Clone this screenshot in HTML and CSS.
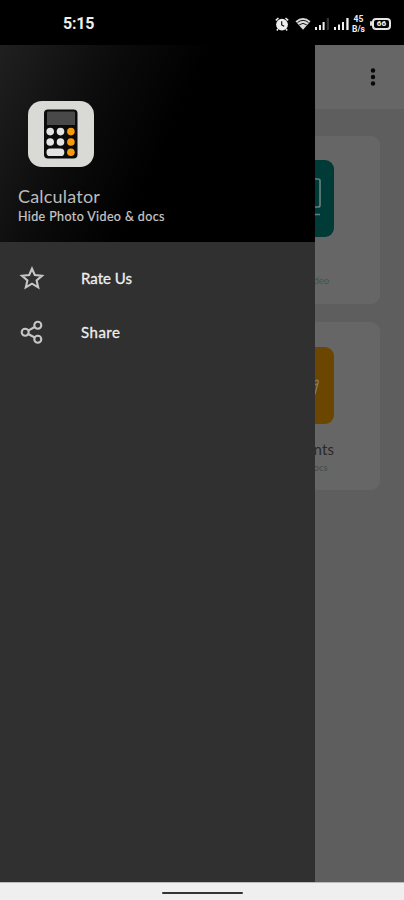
FILE: index.html
```html
<!DOCTYPE html>
<html lang="en">
<head>
<meta charset="utf-8">
<title>Calculator</title>
<link rel="stylesheet" href="styles.css">
</head>
<body>
<div class="phone">
  <header class="status">
    <span class="clock">5:15</span>
    <div class="indicators">
      <svg width="14" height="14" viewBox="0 0 14 14"><circle cx="7" cy="7.6" r="5.9" fill="#eee"/><path d="M.8 3.4 3.5 1M13.2 3.4 10.500 1M3 12l-1.200 1.400M11 12l1.200 1.400" stroke="#eee" stroke-width="1.500"/><path d="M6.700 4.300v3.600l2.500 1.300" fill="none" stroke="#000" stroke-width="1.100"/></svg>
      <svg class="wifi" width="16" height="13" viewBox="0 0 16 13"><path d="M.5 4.200Q8-2 15.500 4.200L8 12.700Z" fill="#ddd"/><path d="M2.500 5.500Q8 1.200 13.500 5.500M4.300 7.800Q8 5 11.700 7.800" fill="none" stroke="#111" stroke-width="1"/></svg>
      <svg class="signal" width="16" height="12" viewBox="0 0 16 12"><path d="M1 9h2v3H1zM5 7h2v5H5zM8.600 4h2v8h-2z" fill="#eee"/><path d="M12.700 0h2.300v12h-2.300z" fill="#333"/></svg>
      <svg class="signal" width="17" height="12" viewBox="0 0 17 12"><path d="M1 9h2v3H1zM5 6.500h2V12H5zM9 4h2v8H9zM13.300 0h2.300v12h-2.300z" fill="#eee"/></svg>
      <span class="speed"><b>45</b><b>B/s</b></span>
      <span class="battery"><span class="level">66</span></span>
    </div>
  </header>
  <div class="stage">
    <main class="app">
      <div class="appbar">
        <svg width="6" height="20" viewBox="0 0 6 20"><g fill="#080808"><circle cx="3" cy="3.500" r="2.200"/><circle cx="3" cy="10" r="2.200"/><circle cx="3" cy="16.500" r="2.200"/></g></svg>
      </div>
      <div class="cards">
        <section class="card first">
          <div class="tile teal">
            <svg width="77" height="77" viewBox="0 0 77 77" fill="none" stroke="#64807e" stroke-width="1.700"><rect x="14" y="19" width="49" height="28" rx="2"/><path d="M14 54.500h49"/></svg>
          </div>
          <h2>Video</h2>
          <p class="green">Hide Your Video</p>
        </section>
        <section class="card">
          <div class="tile orange">
            <svg width="77" height="77" viewBox="0 0 77 77" fill="none" stroke="#8d7752" stroke-width="1.400"><path d="M57 35c3-3 5-2 4 1l-3 11-3 3M57 38l3-1"/></svg>
          </div>
          <h2>Documents</h2>
          <p>Hide Your Docs</p>
        </section>
      </div>
    </main>
    <aside class="drawer">
      <div class="profile">
        <svg class="logo" width="68" height="68" viewBox="0 0 68 68">
          <rect x="1" y="1" width="66" height="66" rx="14" fill="#d9d9d6"/>
          <rect x="17" y="9.500" width="33.500" height="49" rx="4" fill="#0b0b0b"/>
          <path d="M20 12.500q0-1 1-1h26q1 0 1 1V25H20z" fill="#494949"/>
          <g fill="#e4e4e4"><circle cx="23.200" cy="31.600" r="3.800"/><circle cx="33.500" cy="31.600" r="3.800"/><circle cx="23.200" cy="42" r="3.800"/><circle cx="33.500" cy="42" r="3.800"/><rect x="19.500" y="48.500" width="17.800" height="7.500" rx="3.600"/></g>
          <g fill="#f99a08"><circle cx="43.900" cy="31.600" r="3.800"/><circle cx="43.900" cy="42" r="3.800"/><circle cx="43.900" cy="52.300" r="3.800"/></g>
        </svg>
        <h1>Calculator</h1>
        <p>Hide Photo Video &amp; docs</p>
      </div>
      <nav class="menu">
        <a class="item"><svg width="26" height="26" viewBox="0 0 26 26" fill="none" stroke="#c6c6c6" stroke-width="2.100" stroke-linejoin="miter"><path d="M13 3.700 15.800 10 23 10.700 17.600 15.400 19.200 22.400 13 18.700 6.800 22.400 8.400 15.400 3 10.700 10.200 10Z"/></svg><span>Rate Us</span></a>
        <a class="item"><svg width="26" height="26" viewBox="0 0 26 26" fill="none" stroke="#c6c6c6" stroke-width="2.100"><circle cx="6.200" cy="13.300" r="3.500"/><circle cx="18.800" cy="6.200" r="3.500"/><circle cx="18.800" cy="20.200" r="3.500"/><path d="M9.200 11.600 15.700 8M9.200 15 15.700 18.500"/></svg><span class="share">Share</span></a>
      </nav>
    </aside>
  </div>
  <footer class="gesture"><div class="handle"></div></footer>
</div>
</body>
</html>
```
FILE: styles.css
```css
* { box-sizing: border-box; }
body { margin: 0; background: #000; font-family: Lato, "Liberation Sans", sans-serif; }
h1, h2, p { margin: 0; font-weight: 400; white-space: nowrap; }
svg { display: block; flex: none; }

.phone { display: flex; flex-direction: column; width: 404px; height: 900px; overflow: hidden; }

.status {
  display: flex; align-items: center; justify-content: space-between;
  height: 45px; padding: 2px 13px 0 63px; background: #000; color: #eee;
}
.clock { font: 700 16px/20px Roboto, sans-serif; letter-spacing: -.2px; }
.indicators { display: flex; align-items: center; }
.wifi { margin-left: 6px; }
.signal { margin-left: 3px; }
.speed { display: flex; flex-direction: column; align-items: center; width: 15px; margin-left: 1px; font: 8.5px/10px Roboto, sans-serif; }
.battery { display: flex; align-items: center; margin-left: 4px; }
.battery::before { content: ""; width: 2px; height: 5px; background: #ddd; border-radius: 1px; }
.level { width: 19px; height: 12px; border: 2px solid #e5e5e5; border-radius: 4px; font: 900 8px/8px Roboto, sans-serif; text-align: center; }

.stage { position: relative; flex: 1; min-height: 0; background: #5e5e5e; }
.appbar { display: flex; align-items: center; justify-content: flex-end; height: 64px; padding-right: 28px; background: #666; }
.cards { display: flex; flex-direction: column; gap: 18px; width: 169px; margin: 27px 24px 0 auto; }
.card { display: flex; flex-direction: column; align-items: center; height: 168px; padding-top: 25px; background: #666; border-radius: 9px; }
.first { padding-top: 24px; }
.tile { width: 77px; height: 77px; border-radius: 9px; overflow: hidden; }
.teal { background: #003b37; }
.orange { background: #6b4600; }
.card h2 { margin-top: 15px; font-size: 15px; line-height: 20px; letter-spacing: .2px; color: #292929; }
.card p { margin-top: 1px; font-size: 9.5px; line-height: 16px; color: #434b47; }
.card .green { color: #375a45; }

.drawer { position: absolute; left: 0; top: 0; width: 315px; height: 100%; background: #303030; }
.profile { height: 197px; padding: 55px 18px 0; background: linear-gradient(115deg, #202020 0%, #0b0b0b 30%, #000 52%); color: #bcbcbc; }
.logo { margin-left: 9px; }
.profile h1 { margin-top: 17px; font-size: 18px; line-height: 22px; letter-spacing: .2px; }
.profile p { margin-top: 1px; font-size: 12.500px; line-height: 18px; letter-spacing: .39px; color: #c8c8c8; -webkit-text-stroke: .2px #c8c8c8; }
.menu { display: flex; flex-direction: column; padding-top: 9px; }
.item { display: flex; align-items: center; gap: 36px; height: 54px; padding-left: 19px; font-size: 15px; color: #eee; -webkit-text-stroke: .3px #eee; }
.share { letter-spacing: .5px; }

.gesture { display: flex; justify-content: center; height: 18px; padding-top: 9px; background: #efefef; border-top: 1px solid #bbb; }
.handle { width: 81px; height: 2px; background: #333; border-radius: 1px; }
```
